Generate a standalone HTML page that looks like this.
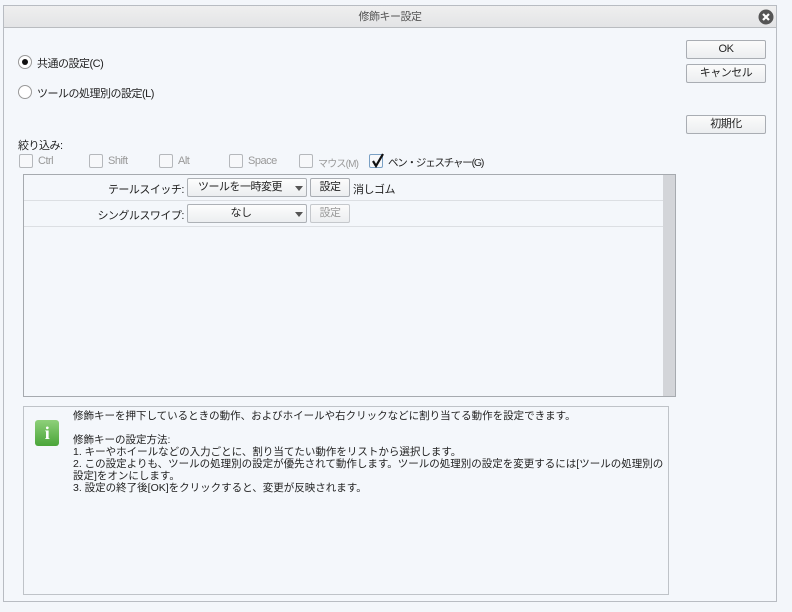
<!DOCTYPE html>
<html><head><meta charset="utf-8"><style>
*{margin:0;padding:0;box-sizing:border-box}
body{width:792px;height:612px;background:#f3f6fa;font-family:"Liberation Sans","Noto Sans CJK JP",sans-serif;font-size:11px;color:#222;position:relative;overflow:hidden;letter-spacing:-0.5px}
.a{position:absolute;white-space:nowrap}
.dlg{left:3px;top:5px;width:774px;height:597px;border:1px solid #b8bcc2;background:#f4f7fb}
.title{left:4px;top:6px;width:772px;height:22px;background:linear-gradient(#efefef,#e3e4e6);border-bottom:1px solid #b9bcc0;text-align:center;line-height:22px;color:#555;font-size:11px}
.btn{border:1px solid #a9adb3;border-radius:2px;background:linear-gradient(#fbfbfb,#eceef0);text-align:center;line-height:17px;height:19px}
.radio{width:14px;height:14px;border:1px solid #999;border-radius:50%;background:#fff}
.cb{width:14px;height:14px;border:1px solid #b5b8bc;border-radius:2px;background:#f7f8fa}
.dis{color:#999}
.sel{height:19px;border:1px solid #adb1b6;border-radius:2px;background:linear-gradient(#fdfdfd,#eceef0);line-height:17px}
</style></head><body>
<div class="a dlg"></div>
<div class="a title">修飾キー設定</div>
<svg class="a" style="left:758px;top:9px" width="16" height="16" viewBox="0 0 16 16"><circle cx="8" cy="8" r="7.5" fill="#555"/><path d="M5 5L11 11M11 5L5 11" stroke="#fff" stroke-width="2.2"/></svg>

<div class="a btn" style="left:686px;top:40px;width:80px">OK</div>
<div class="a btn" style="left:686px;top:64px;width:80px">キャンセル</div>
<div class="a btn" style="left:686px;top:115px;width:80px">初期化</div>

<div class="a radio" style="left:18px;top:55px"></div><div class="a" style="left:22px;top:59px;width:6px;height:6px;border-radius:50%;background:#111"></div>
<div class="a" style="left:37px;top:55px">共通の設定(C)</div>
<div class="a radio" style="left:18px;top:85px"></div>
<div class="a" style="left:37px;top:85px">ツールの処理別の設定(L)</div>

<div class="a" style="left:18px;top:137px">絞り込み:</div>
<div class="a cb" style="left:19px;top:154px"></div><div class="a dis" style="left:38px;top:155px">Ctrl</div>
<div class="a cb" style="left:89px;top:154px"></div><div class="a dis" style="left:108px;top:155px">Shift</div>
<div class="a cb" style="left:159px;top:154px"></div><div class="a dis" style="left:178px;top:155px">Alt</div>
<div class="a cb" style="left:229px;top:154px"></div><div class="a dis" style="left:248px;top:155px">Space</div>
<div class="a cb" style="left:299px;top:154px"></div><div class="a dis" style="left:318px;top:155px;font-size:10px;letter-spacing:-0.8px">マウス(M)</div>
<div class="a cb" style="left:369px;top:154px;border-color:#7aa0c4"></div>
<svg class="a" style="left:370px;top:152px" width="16" height="17" viewBox="0 0 16 17"><path d="M3 9L6 14L13 2" stroke="#111" stroke-width="2.2" fill="none"/></svg>
<div class="a" style="left:388px;top:155px;font-size:10.5px;letter-spacing:-1.2px">ペン・ジェスチャー(G)</div>

<div class="a" style="left:23px;top:174px;width:653px;height:223px;border:1px solid #a6aaaf;background:#f4f7fb"></div>
<div class="a" style="left:663px;top:175px;width:12px;height:221px;background:#d3d5d9"></div>
<div class="a" style="left:24px;top:200px;width:639px;height:1px;background:#dcdfe3"></div>
<div class="a" style="left:24px;top:226px;width:639px;height:1px;background:#dcdfe3"></div>
<div class="a" style="right:608px;top:181px">テールスイッチ:</div>
<div class="a sel" style="left:187px;top:178px;width:120px;padding-left:10px">ツールを一時変更</div>
<div class="a" style="left:295px;top:186px;border:4px solid transparent;border-top:5px solid #555"></div>
<div class="a btn" style="left:310px;top:178px;width:40px">設定</div>
<div class="a" style="left:353px;top:181px">消しゴム</div>
<div class="a" style="right:608px;top:207px">シングルスワイプ:</div>
<div class="a sel" style="left:187px;top:204px;width:120px;text-align:center;padding-right:12px">なし</div>
<div class="a" style="left:295px;top:212px;border:4px solid transparent;border-top:5px solid #555"></div>
<div class="a btn dis" style="left:310px;top:204px;width:40px;border-color:#c5c8cc">設定</div>

<div class="a" style="left:23px;top:406px;width:646px;height:189px;border:1px solid #bfc3c8;background:#f4f7fb"></div>
<div class="a" style="left:35px;top:420px;width:24px;height:26px;border-radius:3px;background:linear-gradient(#8ed07a,#4aa539);color:#fff;font:bold 18px 'Liberation Serif',serif;text-align:center;line-height:26px">i</div>
<div class="a" style="left:73px;top:410px;line-height:12px;font-size:10.5px;letter-spacing:0">修飾キーを押下しているときの動作、およびホイールや右クリックなどに割り当てる動作を設定できます。<br><br>修飾キーの設定方法:<br>1. キーやホイールなどの入力ごとに、割り当てたい動作をリストから選択します。<br>2. この設定よりも、ツールの処理別の設定が優先されて動作します。ツールの処理別の設定を変更するには[ツールの処理別の<br>設定]をオンにします。<br>3. 設定の終了後[OK]をクリックすると、変更が反映されます。</div>
</body></html>
